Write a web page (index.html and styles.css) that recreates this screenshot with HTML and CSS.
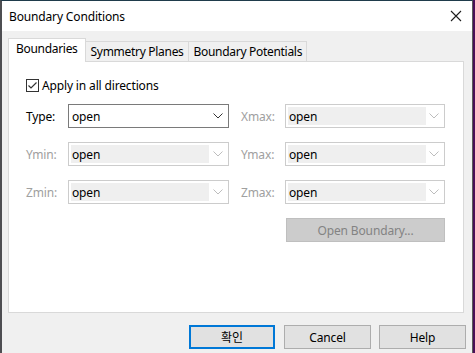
FILE: index.html
```html
<!DOCTYPE html>
<html lang="en">
<head>
    <meta charset="UTF-8" />
    <title>Boundary Conditions</title>
    <link rel="stylesheet" href="styles.css">
</head>
<body>
<div class="window">
    <div class="titlebar">
        <span class="title">Boundary Conditions</span>
        <svg class="close" width="12" height="12" viewBox="0 0 12 12">
            <path d="M1 1 L11 11 M11 1 L1 11" stroke="#1e1e1e" stroke-width="1.1" fill="none"/>
        </svg>
    </div>
    <div class="content">
        <div class="tabs">
            <div class="tab active">Boundaries</div>
            <div class="tab">Symmetry Planes</div>
            <div class="tab">Boundary Potentials</div>
        </div>
        <div class="panel">
            <label class="check">
                <svg class="box" width="13" height="13" viewBox="0 0 13 13">
                    <rect x="0.5" y="0.5" width="12" height="12" fill="#fff" stroke="#333"/>
                    <path d="M2.5 6.5 L5 9 L10.5 3.5" stroke="#333" stroke-width="1.2" fill="none"/>
                </svg>
                Apply in all directions
            </label>
            <div class="grid">
                <span class="lbl">Type:</span>
                <div class="combo">
                    <span class="val">open</span>
                    <svg class="chev" width="10" height="6" viewBox="0 0 10 6"><path d="M0.5 0.5 L5 5 L9.5 0.5" stroke="#333" fill="none"/></svg>
                </div>
                <span class="lbl off">Xmax:</span>
                <div class="combo off">
                    <span class="val">open</span>
                    <svg class="chev" width="10" height="6" viewBox="0 0 10 6"><path d="M0.5 0.5 L5 5 L9.5 0.5" stroke="#bdbdbd" fill="none"/></svg>
                </div>

                <span class="lbl off">Ymin:</span>
                <div class="combo off">
                    <span class="val">open</span>
                    <svg class="chev" width="10" height="6" viewBox="0 0 10 6"><path d="M0.5 0.5 L5 5 L9.5 0.5" stroke="#bdbdbd" fill="none"/></svg>
                </div>
                <span class="lbl off">Ymax:</span>
                <div class="combo off">
                    <span class="val">open</span>
                    <svg class="chev" width="10" height="6" viewBox="0 0 10 6"><path d="M0.5 0.5 L5 5 L9.5 0.5" stroke="#bdbdbd" fill="none"/></svg>
                </div>

                <span class="lbl off">Zmin:</span>
                <div class="combo off">
                    <span class="val">open</span>
                    <svg class="chev" width="10" height="6" viewBox="0 0 10 6"><path d="M0.5 0.5 L5 5 L9.5 0.5" stroke="#bdbdbd" fill="none"/></svg>
                </div>
                <span class="lbl off">Zmax:</span>
                <div class="combo off">
                    <span class="val">open</span>
                    <svg class="chev" width="10" height="6" viewBox="0 0 10 6"><path d="M0.5 0.5 L5 5 L9.5 0.5" stroke="#bdbdbd" fill="none"/></svg>
                </div>

                <button class="btn-open" disabled>Open Boundary...</button>
            </div>
        </div>
        <div class="buttons">
            <button class="btn default">확인</button>
            <button class="btn">Cancel</button>
            <button class="btn">Help</button>
        </div>
    </div>
</div>
</body>
</html>
```

FILE: styles.css
```css
* { margin: 0; padding: 0; box-sizing: border-box; }
body {
    background: #4a0f57;
    font-family: "Noto Sans", "Noto Sans CJK KR", sans-serif;
    font-size: 12px;
    letter-spacing: -0.15px;
    color: #000;
    width: 475px;
    height: 353px;
    overflow: hidden;
}
.window {
    width: 473px;
    height: 353px;
    background: #f0f0f0;
    border-top: 1px solid #1f3b4b;
    border-left: 2px solid #4e4e52;
    border-right: 1px solid #5a5a5a;
    display: flex;
    flex-direction: column;
}
.titlebar {
    height: 30px;
    background: #fff;
    display: flex;
    align-items: center;
    justify-content: space-between;
    padding: 0 10px 0 7px;
}
.title { font-size: 12px; color: #000; }
.content {
    padding: 7px 6px 0 6px;
    display: flex;
    flex-direction: column;
}
.tabs {
    display: flex;
    align-items: flex-end;
    height: 23px;
    position: relative;
    z-index: 1;
    letter-spacing: -0.3px;
}
.tab {
    height: 20px;
    padding: 0 4px 0 5px;
    border: 1px solid #d9d9d9;
    border-bottom: none;
    background: #f0f0f0;
    line-height: 19px;
    margin-left: -1px;
}
.tab.active {
    height: 24px;
    margin-left: 0;
    margin-bottom: -1px;
    padding: 0 7px;
    background: #fff;
    line-height: 20px;
    z-index: 2;
}
.panel {
    width: 456px;
    height: 252px;
    background: #fff;
    border: 1px solid #d9d9d9;
    padding: 15px 0 0 17px;
}
.check {
    display: flex;
    align-items: center;
    gap: 3px;
    height: 16px;
}
.grid {
    display: grid;
    grid-template-columns: 42px 161px 12px 44px 160px;
    grid-auto-rows: 24px;
    row-gap: 14px;
    margin-top: 11px;
    align-items: center;
}
.grid > :nth-child(4n+3) { grid-column: 4; }
.lbl.off { color: #a0a0a0; }
.combo {
    height: 24px;
    border: 1px solid #7a7a7a;
    background: #fff;
    display: flex;
    align-items: center;
    justify-content: space-between;
    padding: 0 5px 0 3px;
}
.combo.off {
    border-color: #cccccc;
    padding: 2px 5px 2px 2px;
}
.combo.off .val {
    background: #efefef;
    width: 138px;
    height: 100%;
    display: flex;
    align-items: center;
    padding-left: 1px;
}
.btn-open {
    grid-column: 5;
    height: 24px;
    margin-left: 1px;
    background: #cccccc;
    border: 1px solid #bfbfbf;
    color: #838383;
    font-family: inherit;
    font-size: 12px;
    letter-spacing: inherit;
}
.buttons {
    display: flex;
    justify-content: flex-end;
    gap: 8px;
    margin-top: 12px;
}
.btn {
    width: 87px;
    height: 24px;
    background: #e1e1e1;
    border: 1px solid #adadad;
    font-family: inherit;
    font-size: 12px;
    letter-spacing: inherit;
    color: #000;
}
.btn.default {
    width: 86px;
    margin-right: 1px;
    border: 2px solid #0078d7;
}
```
